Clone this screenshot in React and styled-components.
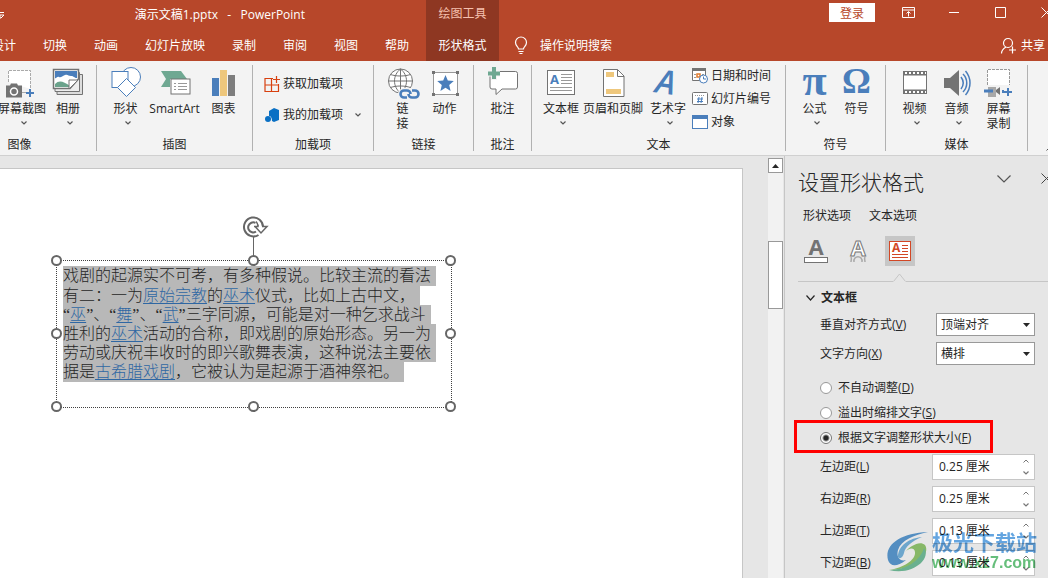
import React, { useState } from 'react'
import styled, { createGlobalStyle, css } from 'styled-components'

const GlobalStyle = createGlobalStyle`
* { box-sizing: border-box; }
body {
    margin: 0;
    color: #262626;
    font-family: "Open Sans", "Noto Sans CJK SC", sans-serif;
    font-size: 12px;
    line-height: 16px;
}
button, input, select {
    color: inherit;
    font: inherit;
}
button {
    margin: 0;
    padding: 0;
    border: 0;
    background: none;
}
svg { display: block; flex: none; overflow: visible; }
`

const Window = styled.div`
display: flex;
flex-direction: column;
height: 100vh;
overflow: hidden;
background: #e6e6e6;
`

/* ---------- title bar and tabs ---------- */

const Header = styled.header`
display: grid;
grid-template-columns: 426px 73px 1fr;
grid-template-rows: 28px 33px;
flex: none;
overflow: hidden;
background: #b7472a;
color: #fff;
`
const TitleBar = styled.div`
display: flex;
align-items: center;
justify-content: space-between;
padding: 2px 121px 0 0;
white-space: pre;
`
const ContextLabel = styled.div`
display: flex;
align-items: center;
justify-content: center;
background: #8e3722;
color: #f5c0ae;
`
const WindowControls = styled.div`
display: flex;
align-items: center;
justify-content: flex-end;
margin-right: -21px;
`
const SignIn = styled.button`
width: 46px;
height: 19px;
margin: 0 10px 3px 0;
padding-top: 2px;
background: #fff;
color: #b7472a;
`
const WindowButton = styled.button`
display: flex;
justify-content: center;
width: 46px;
padding-bottom: 4px;
`
const Tabs = styled.nav`
display: flex;
gap: 1px;
align-items: stretch;
justify-content: flex-end;
padding-right: 4px;
min-width: 0;
`
const Tab = styled.button`
flex: none;
padding: 2px 13px 0;
white-space: nowrap;
${props => props.$active && css`
    padding: 2px 12px 0;
    background: #8e3722;
`}
`
const HeaderTools = styled.div`
display: flex;
align-items: center;
justify-content: space-between;
padding: 2px 3px 0 15px;
`
const HeaderButton = styled.button`
display: flex;
align-items: center;
gap: ${props => props.$gap}px;
`

/* ---------- ribbon ---------- */

const Ribbon = styled.div`
display: flex;
flex: none;
height: 95px;
padding: 4px 0;
background: #f3f3f3;
border-bottom: 1px solid #d0d0d0;
`
const Group = styled.section`
display: flex;
flex: none;
flex-direction: column;
justify-content: space-between;
width: ${props => props.$width}px;
border-right: 1px solid #b1b1b1;
&:first-child {
    margin-left: -57px;
}
`
const GroupBody = styled.div`
display: flex;
justify-content: ${props => props.$align || 'center'};
padding: 0 7px 0 ${props => props.$pad || 7}px;
`
const GroupName = styled.div`
line-height: 12px;
text-align: center;
`
const BigButton = styled.button`
display: flex;
flex: none;
flex-direction: column;
align-items: center;
width: ${props => props.$width || 42}px;
padding-top: 2px;
line-height: 15px;
white-space: pre;
`
const IconBox = styled.span`
display: flex;
align-items: center;
justify-content: center;
width: 32px;
height: 32px;
margin-bottom: 2px;
`
const Chevron = styled.span`
display: flex;
justify-content: center;
padding: 5px 0 0 4px;
`
const SmallColumn = styled.div`
display: flex;
flex: none;
flex-direction: column;
gap: ${props => props.$gap}px;
padding-top: ${props => props.$top}px;
`
const SmallButton = styled.button`
display: flex;
align-items: center;
gap: 3px;
height: 16px;
white-space: nowrap;
`
const SmallChevron = styled.span`
margin-left: 9px;
`
const Glyph = styled.span`
padding-bottom: 4px;
color: #4a7ebb;
font-family: "Liberation Serif", serif;
font-size: ${props => props.$size}px;
font-weight: bold;
line-height: 28px;
`
const RibbonEnd = styled.div`
display: flex;
flex: 1;
align-items: flex-end;
justify-content: flex-end;
margin-right: -6px;
`

/* ---------- slide ---------- */

const Workspace = styled.main`
display: flex;
flex: 1;
min-height: 0;
`
const Slide = styled.div`
position: relative;
flex: 1;
margin: 12px 25px 0 0;
background: #fff;
border-top: 1px solid #c6c6c6;
border-right: 1px solid #c6c6c6;
`
const ShapeFrame = styled.div`
position: absolute;
top: 91px;
left: 56px;
width: 396px;
height: 148px;
padding: 5px 6px;
border: 1px dotted #404040;
`
const Handle = styled.span`
position: absolute;
left: ${props => props.$x};
top: ${props => props.$y};
width: 11px;
height: 11px;
margin: -6px;
border: 2px solid #666;
border-radius: 50%;
background: #fff;
`
const Rotate = styled.svg`
position: absolute;
left: 184px;
top: -46px;
`
const SlideText = styled.p`
margin: 0;
color: #262626;
font-family: "Liberation Serif", "Noto Sans CJK SC", serif;
font-size: 16px;
font-weight: 300;
white-space: nowrap;
`
const Line = styled.span`
display: table;
height: 19px;
padding-right: 5px;
background: #b8b8b8;
line-height: 19px;
&:first-child, &:last-child {
    line-height: 20px;
}
`
const TextLink = styled.a`
color: #2f67a3;
text-decoration: underline;
text-underline-offset: 2px;
`
const ScrollBar = styled.div`
display: flex;
flex-direction: column;
flex: none;
width: 15px;
margin: 2px 1px 0 0;
background: #f2f2f2;
`
const ScrollUp = styled.button`
display: flex;
align-items: center;
justify-content: center;
height: 15px;
border: 1px solid #999;
background: #fff;
`
const ScrollThumb = styled.div`
height: 68px;
margin-top: 68px;
border: 1px solid #999;
background: #fff;
`

/* ---------- format pane ---------- */

const Pane = styled.aside`
flex: none;
width: 264px;
padding: 10px 0 0 13px;
overflow: hidden;
border-left: 1px solid #c6c6c6;
`
const PaneTitle = styled.div`
display: flex;
align-items: center;
margin-right: -4px;
`
const PaneHeading = styled.h2`
flex: 1;
margin: 0;
font-size: 21px;
font-weight: 300;
line-height: 32px;
`
const PaneButton = styled.button`
margin-left: 30px;
padding-bottom: 7px;
`
const PaneTabs = styled.div`
display: flex;
gap: 18px;
margin-top: 8px;
padding-left: 5px;
line-height: 20px;
`
const PaneIcons = styled.div`
display: flex;
gap: 12px;
margin-top: 10px;
padding-left: 3px;
`
const PaneIcon = styled.button`
display: flex;
align-items: center;
justify-content: center;
width: 30px;
height: 30px;
background: ${props => props.$active ? '#c6c6c6' : 'none'};
`
const Divider = styled.div`
display: flex;
align-items: flex-end;
margin-top: 7px;
&::before, &::after {
    content: "";
    width: 95px;
    height: 1px;
    background: #c6c6c6;
}
&::after { flex: 1; }
`
const Section = styled.button`
display: flex;
align-items: center;
gap: 6px;
margin-top: 6px;
padding-left: 8px;
font-weight: bold;
line-height: 20px;
`
const Form = styled.form`
display: flex;
flex-direction: column;
gap: 6px;
padding: 5px 13px 0 22px;
`
const Field = styled.div`
display: flex;
align-items: center;
justify-content: space-between;
`
const SelectBox = styled.span`
display: flex;
position: relative;
width: 99px;
height: 23px;
svg {
    position: absolute;
    top: 10px;
    right: 5px;
    pointer-events: none;
}
`
const Select = styled.select`
width: 100%;
padding: 0 4px;
appearance: none;
border: 1px solid #999;
border-radius: 0;
background: #fff;
`
const Radios = styled.div`
margin: 4px 0 -2px;
`
const RadioRow = styled.label`
display: flex;
position: relative;
align-items: center;
gap: 6px;
height: 25px;
`
const Radio = styled.input`
width: 12px;
height: 12px;
margin: 0;
appearance: none;
border: 1px solid #999;
border-radius: 50%;
background: #fff;
&:checked {
    border-color: #777;
    background: radial-gradient(circle, #262626 0 2px, #fff 4px);
}
`
const Highlight = styled.span`
position: absolute;
top: -5px;
left: -26px;
width: 199px;
height: 33px;
border: 3px solid #f00;
`
const SpinBox = styled.span`
display: flex;
width: 103px;
height: 26px;
border: 1px solid #c6c6c6;
background: #fff;
`
const SpinInput = styled.input`
flex: 1;
min-width: 0;
padding: 0 0 0 6px;
border: 0;
background: none;
outline: none;
`
const SpinButtons = styled.span`
display: flex;
flex-direction: column;
justify-content: space-between;
padding: 4px 5px;
`
const Watermark = styled.div`
display: flex;
position: fixed;
right: 11px;
bottom: 6px;
gap: 1px;
mix-blend-mode: multiply;
opacity: 0.8;
pointer-events: none;
`
const WatermarkText = styled.div`
display: flex;
flex-direction: column;
`
const WatermarkName = styled.span`
color: #3d8fd9;
font-size: 21px;
font-weight: bold;
line-height: 24px;
`
const WatermarkUrl = styled.span`
color: #3fae5a;
font-family: "Liberation Sans", sans-serif;
font-size: 16px;
font-weight: bold;
line-height: 18px;
`

/* ---------- icons ---------- */

const BLUE = '#4a7ebb'
const GREY = '#737373'

const Svg = ({ w = 32, h = w, children, ...rest }) => (
    <svg width={w} height={h} viewBox={`0 0 ${w} ${h}`} fill="none" aria-hidden="true" {...rest}>{children}</svg>
)

const Down = ({ w = 5, h = 3, color = '#555' }) => (
    <Svg w={w + 1} h={h + 1}><path d={`M.5 .5L${(w + 1) / 2} ${h}L${w + .5} .5`} stroke={color} strokeWidth="1.2" /></Svg>
)

const ScreenshotIcon = () => (
    <Svg>
        <path d="M2.500 15V3.500H24.500V22" fill="#fff" stroke="#aaa" strokeDasharray="3 1" />
        <path d="M16 25.500h4" stroke="#aaa" />
        <path d="M0 18.500h4l1-2h6l1 2h4v12H0z" fill={GREY} />
        <circle cx="8" cy="24.500" r="3.500" stroke="#fff" strokeWidth="1.500" />
        <path d="M20 26h8M24 22v8" stroke={BLUE} strokeWidth="2" />
    </Svg>
)
const AlbumIcon = () => (
    <Svg>
        <path d="M5 24.500V27.500H30.500V7.500H28" fill="#ddd" stroke={GREY} />
        <path d="M3 21.500V24.500H27.500V5.500H26" fill="#eee" stroke={GREY} />
        <path d="M1.500 2.500H26.500V12L18 21.500H1.500z" fill="#fff" stroke={GREY} strokeWidth="1.500" />
        <path d="M3 4h22v7c-3 0-3-2-6-2s-3-2-6-1-4 3-6 2-3 2-4 1z" fill={BLUE} />
        <path d="M3 17c4-4 8-3 15 2l-1 1H3z" fill="#6ba38c" />
        <path d="M17 13h9l-9 9z" fill="#fff" stroke={GREY} />
    </Svg>
)
const ShapesIcon = () => (
    <Svg>
        <circle cx="21" cy="10" r="9.500" fill="#fff" stroke={BLUE} />
        <rect x="2" y="4.500" width="16" height="16" fill="#fff" stroke={BLUE} />
        <path d="M16.500 11.500L25.500 20.500L16.500 29.500L7.500 20.500z" fill="#fff" stroke={BLUE} />
    </Svg>
)
const SmartArtIcon = () => (
    <Svg>
        <path d="M2 4h20l6 8H11v8H2l5-8z" fill="#6fa892" />
        <rect x="12" y="12" width="19" height="15" fill="#fff" stroke={GREY} />
        <path d="M15 16.500h2m2 0h9m-13 3h2m2 0h9m-13 3h2m2 0h9" stroke="#999" />
    </Svg>
)
const ChartIcon = () => (
    <Svg>
        <path d="M4 11h7v18H4z" fill={BLUE} />
        <path d="M12 3h7v26h-7z" fill="#eec77c" />
        <path d="M20 8h7v21h-7z" fill="#7d7d7d" />
    </Svg>
)
const StoreIcon = () => (
    <Svg w={16}>
        <path d="M9 2.500H1V15.500H14.500V8M1 9h13.500M7.500 2.500v13M12.500 0v7M9 3.500h7" stroke="#d8400f" strokeWidth="1.200" />
    </Svg>
)
const AddinIcon = () => (
    <Svg w={16}>
        <path d="M5 4l5-3 5 2v10l-5 2-2-1c0-3-1-5-3-5z" fill="#0a70c4" />
        <circle cx="4" cy="12" r="3" fill="#0a70c4" />
    </Svg>
)
const LinkIcon = () => (
    <Svg>
        <circle cx="13.500" cy="14" r="12" fill="#fff" stroke={GREY} />
        <path d="M13.500 2v24M1.500 14h24M3.500 7.500c6 2 14 2 20 0M3.500 20.500c6-2 14-2 20 0M13.500 2c-8 6-8 18 0 24M13.500 2c8 6 8 18 0 24" stroke={GREY} />
        <rect x="11" y="21" width="22" height="12" rx="6" fill="#f3f3f3" />
        <path d="M20 30.500h-3a3.500 3.500 0 010-7h3a3.500 3.500 0 013.500 3.500M25 23.500h3a3.500 3.500 0 010 7h-3a3.500 3.500 0 01-3.500-3.500" stroke={BLUE} strokeWidth="2.600" />
    </Svg>
)
const ActionIcon = () => (
    <Svg>
        <rect x="4.500" y="5.500" width="24" height="22" fill="#fff" stroke="#999" />
        <path d="M3 4h3v3H3zM27 4h3v3h-3zM3 26h3v3H3zM27 26h3v3h-3z" fill={GREY} />
        <path d="M16.500 8l2.300 5.500 6 .5-4.600 4 1.400 6-5.100-3.200L11.400 24l1.400-6-4.600-4 6-.5z" fill={BLUE} />
    </Svg>
)
const CommentIcon = () => (
    <Svg>
        <path d="M6 4.500H28.500a2 2 0 012 2V20a2 2 0 01-2 2H15l-6 5.500V22H5a2 2 0 01-2-2V4.500z" fill="#fff" stroke={GREY} />
        <path d="M1 6.500h12M7 1v12" stroke="#f3f3f3" strokeWidth="6" />
        <path d="M1 6.500h12M7 0v12" stroke="#6fa892" strokeWidth="4" />
    </Svg>
)
const TextBoxIcon = ({ color = BLUE, frame = GREY }) => (
    <Svg>
        <rect x="2.500" y="3.500" width="27" height="24" fill="#fff" stroke={frame} />
        <text x="5" y="17" fill={color} fontSize="13" fontWeight="bold" fontFamily="Open Sans">A</text>
        <path d="M16 7.500h11M16 10.500h11M16 13.500h11M16 16.500h11M5 20.500h22M5 23.500h22" stroke="#999" />
    </Svg>
)
const HeaderFooterIcon = () => (
    <Svg>
        <path d="M6.500 2.500H20.500L27 9V29.500H6.500z" fill="#fff" stroke={GREY} />
        <path d="M20.500 2.500V9.500H27" stroke={GREY} />
        <path d="M9 5h8v5H9zM9 22h15v5H9z" fill="#eec77c" />
    </Svg>
)
const WordArtIcon = () => (
    <Svg>
        <text x="4" y="27" transform="rotate(8 16 16)" fill={BLUE} fontSize="33" fontWeight="600" fontStyle="italic" fontFamily="Open Sans">A</text>
    </Svg>
)
const DateIcon = () => (
    <Svg w={16}>
        <path d="M.5 1.500h13v11H.5z" fill="#fff" stroke={GREY} />
        <path d="M0 0h14v3H0z" fill={GREY} />
        <path d="M2 6.500h2M2 9.500h2M10 6.500h2" stroke="#999" />
        <rect x="5" y="6" width="3" height="3" stroke="#e07b2d" strokeWidth="1.500" />
        <circle cx="11.500" cy="11" r="4" fill="#fff" stroke={BLUE} />
        <path d="M11.500 8.500V11H14" stroke={BLUE} />
    </Svg>
)
const SlideNumberIcon = () => (
    <Svg w={16}>
        <rect x=".5" y="1.500" width="15" height="12" rx="1" fill="#fff" stroke={GREY} />
        <path d="M3 4.500h10" stroke="#999" strokeDasharray="1 1" />
        <path d="M7 6l-1 6M10 6l-1 6M5 8h6M5 10.500h6" stroke={BLUE} />
    </Svg>
)
const ObjectIcon = () => (
    <Svg w={16}>
        <rect x=".5" y="1.500" width="15" height="13" fill="#fff" stroke={BLUE} />
        <path d="M0 1h16v4H0z" fill={BLUE} />
    </Svg>
)
const VideoIcon = () => (
    <Svg>
        <path d="M4 4h24v23H4z" fill={GREY} />
        <path d="M5 8.500h22v14H5z" fill="#fff" />
        <path d="M6 6h21M6 25h21" stroke="#fff" strokeWidth="2" strokeDasharray="2 2" />
    </Svg>
)
const AudioIcon = () => (
    <Svg>
        <path d="M3 11h6l9-8v26l-9-8H3z" fill={GREY} />
        <path d="M20 10c3 4 3 8 0 12M22 7c5 5 5 13 0 18M24.500 4c6 7 6 17 0 24" stroke={BLUE} strokeWidth="1.500" />
    </Svg>
)
const RecordIcon = () => (
    <Svg>
        <path d="M4.500 18V2.500H26.500V18" fill="#fff" stroke="#999" strokeDasharray="3 1" />
        <path d="M5 20h8v10H5z" fill="#a8a8a8" />
        <path d="M1 24h9M19 24.500h2" stroke={BLUE} strokeWidth="3" />
        <path d="M13 23l4-3v8l-4-3z" fill={GREY} />
        <path d="M21 25h8M25 21v8" stroke={BLUE} strokeWidth="2" />
    </Svg>
)
const RibbonModeIcon = () => (
    <Svg w={13} h={11}>
        <path d="M.5 .5h12v10H.5zM.5 3h12M6.500 9.500V5M4.500 6.500L6.500 4.500L8.500 6.500" stroke="#fff" />
    </Svg>
)
const BulbIcon = () => (
    <Svg w={14} h={18}>
        <path d="M4.500 12c0-2-3-3-3-6.500a5.500 5.500 0 0111 0C12.500 9 9.500 10 9.500 12zM4.500 14.500h5M5.500 16.500h3" stroke="#fff" strokeWidth="1.200" />
    </Svg>
)
const ShareIcon = () => (
    <Svg w={16} h={17}>
        <circle cx="7" cy="6" r="4.500" stroke="#fff" strokeWidth="1.200" />
        <path d="M.5 16.500c0-3 2-5 4.500-6.500M11.500 9.500v7M8 13h7" stroke="#fff" strokeWidth="1.200" />
    </Svg>
)
const CloseIcon = ({ color }) => (
    <Svg w={11}><path d="M.5 .5l10 10M10.500 .5l-10 10" stroke={color} /></Svg>
)
const FillIcon = () => (
    <Svg w={26} h={28}>
        <text x="13" y="18" fill={GREY} fontSize="22" fontWeight="bold" fontFamily="Open Sans" textAnchor="middle">A</text>
        <rect x="1.500" y="20.500" width="23" height="5" fill="#fff" stroke={GREY} />
    </Svg>
)
const EffectsIcon = () => (
    <Svg w={26} h={28}>
        <text x="13" y="19" fill="#fff" stroke="#777" fontSize="22" fontWeight="bold" fontFamily="Open Sans" textAnchor="middle">A</text>
        <path d="M6 20c1 2 0 3 0 5M20 20c-1 2 0 3 0 5M9 25c-1-7 9-7 8 0" stroke="#aaa" strokeWidth="1.500" />
    </Svg>
)
const LayoutIcon = () => (
    <Svg w={22} h={20}>
        <rect x=".5" y=".5" width="21" height="19" fill="#fff" stroke="#d24726" />
        <text x="3" y="11" fill="#d24726" fontSize="12" fontWeight="bold" fontFamily="Open Sans">A</text>
        <path d="M13 4.500h6M13 7.500h6M13 10.500h6M3 13.500h16M3 16.500h16" stroke="#d24726" />
    </Svg>
)
const Logo = () => (
    <Svg w={45} h={42}>
        <path d="M2 30C-2 15 14 3 42 2C28 5 15 10 12 20C10 27 14 32 20 30C10 38 4 36 2 30z" fill="#3486cc" />
        <path d="M12 27C12 15 24 8 36 7C26 11 19 17 18 23C17 27 14 30 12 27z" fill="#57a6dc" />
        <path d="M19 22C24 16 34 10 39 15C45 24 30 40 3 40C17 38 30 30 29 22C28 17 23 18 19 22z" fill="#7cc04e" />
        <path d="M3 40C20 40 34 31 38 18C46 29 26 46 3 40z" fill="#52b487" />
    </Svg>
)

const tabs = ['设计', '切换', '动画', '幻灯片放映', '录制', '审阅', '视图', '帮助']

const groups = [
    { name: '图像', width: 154, align: 'flex-end', items: [
        { label: '屏幕截图', icon: <ScreenshotIcon />, width: 50, menu: true },
        { label: '相册', icon: <AlbumIcon />, menu: true },
    ] },
    { name: '插图', width: 156, items: [
        { label: '形状', icon: <ShapesIcon />, menu: true },
        { label: 'SmartArt', icon: <SmartArtIcon />, width: 56 },
        { label: '图表', icon: <ChartIcon /> },
    ] },
    { name: '加载项', width: 121, align: 'flex-start', pad: 11, gap: 15, top: 11, rows: [
        { label: '获取加载项', icon: <StoreIcon /> },
        { label: '我的加载项', icon: <AddinIcon />, menu: true },
    ] },
    { name: '链接', width: 100, items: [
        { label: '链\n接', icon: <LinkIcon /> },
        { label: '动作', icon: <ActionIcon /> },
    ] },
    { name: '批注', width: 58, items: [
        { label: '批注', icon: <CommentIcon /> },
    ] },
    { name: '文本', width: 254, align: 'flex-start', pad: 8, gap: 7, top: 3, items: [
        { label: '文本框', icon: <TextBoxIcon />, menu: true },
        { label: '页眉和页脚', icon: <HeaderFooterIcon />, width: 62 },
        { label: '艺术字', icon: <WordArtIcon />, width: 48, menu: true },
    ], rows: [
        { label: '日期和时间', icon: <DateIcon /> },
        { label: '幻灯片编号', icon: <SlideNumberIcon /> },
        { label: '对象', icon: <ObjectIcon /> },
    ] },
    { name: '符号', width: 100, items: [
        { label: '公式', icon: <Glyph $size={44}>π</Glyph>, menu: true },
        { label: '符号', icon: <Glyph $size={36}>Ω</Glyph> },
    ] },
    { name: '媒体', width: 142, items: [
        { label: '视频', icon: <VideoIcon />, menu: true },
        { label: '音频', icon: <AudioIcon />, menu: true },
        { label: '屏幕\n录制', icon: <RecordIcon /> },
    ] },
]

const RibbonGroup = ({ name, width, align, pad, items = [], rows, gap, top }) => (
    <Group $width={width}>
        <GroupBody $align={align} $pad={pad}>
            {items.map(item => (
                <BigButton key={item.label} $width={item.width}>
                    <IconBox>{item.icon}</IconBox>
                    {item.label}
                    {item.menu && <Chevron><Down /></Chevron>}
                </BigButton>
            ))}
            {rows && (
                <SmallColumn $gap={gap} $top={top}>
                    {rows.map(row => (
                        <SmallButton key={row.label}>
                            {row.icon}
                            {row.label}
                            {row.menu && <SmallChevron><Down /></SmallChevron>}
                        </SmallButton>
                    ))}
                </SmallColumn>
            )}
        </GroupBody>
        <GroupName>{name}</GroupName>
    </Group>
)

const L = ({ children }) => <TextLink href="#">{children}</TextLink>

const handles = [
    ['0%', '0%'], ['50%', '0%'], ['100%', '0%'],
    ['0%', '50%'], ['100%', '50%'],
    ['0%', '100%'], ['50%', '100%'], ['100%', '100%'],
]

const Shape = () => (
    <ShapeFrame>
        <SlideText>
            <Line>戏剧的起源实不可考，有多种假说。比较主流的看法</Line>
            <Line>有二：一为<L>原始宗教</L>的<L>巫术</L>仪式，比如上古中文，</Line>
            <Line>“<L>巫</L>”、“<L>舞</L>”、“<L>武</L>”三字同源，可能是对一种乞求战斗</Line>
            <Line>胜利的<L>巫术</L>活动的合称，即戏剧的原始形态。另一为</Line>
            <Line>劳动或庆祝丰收时的即兴歌舞表演，这种说法主要依</Line>
            <Line>据是<L>古希腊戏剧</L>，它被认为是起源于酒神祭祀。</Line>
        </SlideText>
        <Rotate width="28" height="46" viewBox="0 0 28 46" fill="none">
            <path d="M12.500 22v24" stroke="#666" />
            <path d="M17.500 20A9.500 9.500 0 1122 12M15 16.500A5 5 0 1117 11" stroke="#666" strokeWidth="2" />
            <path d="M13 11.500h4c0-2-1-4-2-5M21 11.500h5L20 18l-6-6.500" fill="#fff" stroke="#666" strokeWidth="1.500" />
        </Rotate>
        {handles.map(([x, y]) => <Handle key={x + y} $x={x} $y={y} />)}
    </ShapeFrame>
)

const radios = [['不自动调整', 'D'], ['溢出时缩排文字', 'S'], ['根据文字调整形状大小', 'F']]
const margins = [['左边距', 'L', '0.25 厘米'], ['右边距', 'R', '0.25 厘米'], ['上边距', 'T', '0.13 厘米'], ['下边距', 'B', '0.13 厘米']]
const selects = [['垂直对齐方式', 'V', ['顶端对齐', '中部对齐', '底端对齐']], ['文字方向', 'X', ['横排', '竖排']]]

const FormatPane = () => {
    const [fit, setFit] = useState('F')
    return (
        <Pane>
            <PaneTitle>
                <PaneHeading>设置形状格式</PaneHeading>
                <PaneButton aria-label="选项"><Down w={13} h={7} /></PaneButton>
                <PaneButton aria-label="关闭"><CloseIcon color="#444" /></PaneButton>
            </PaneTitle>
            <PaneTabs>
                <button>形状选项</button>
                <button>文本选项</button>
            </PaneTabs>
            <PaneIcons>
                <PaneIcon aria-label="文本填充与轮廓"><FillIcon /></PaneIcon>
                <PaneIcon aria-label="文字效果"><EffectsIcon /></PaneIcon>
                <PaneIcon aria-label="文本框" $active><LayoutIcon /></PaneIcon>
            </PaneIcons>
            <Divider>
                <Svg w={13} h={9}><path d="M.5 8.500L6.500 1L12.500 8.500" stroke="#c6c6c6" /></Svg>
            </Divider>
            <Section><Down w={8} h={5} color="#262626" />文本框</Section>
            <Form>
                {selects.map(([label, key, options]) => (
                    <Field key={key}>
                        <label htmlFor={`field-${key}`}>{label}(<u>{key}</u>)</label>
                        <SelectBox>
                            <Select id={`field-${key}`}>
                                {options.map(option => <option key={option}>{option}</option>)}
                            </Select>
                            <Svg w={7} h={4}><path d="M0 0h7L3.500 4z" fill="#262626" /></Svg>
                        </SelectBox>
                    </Field>
                ))}
                <Radios>
                    {radios.map(([label, key]) => (
                        <RadioRow key={key}>
                            <Radio type="radio" name="fit" checked={fit === key} onChange={() => setFit(key)} />
                            <span>{label}(<u>{key}</u>)</span>
                            {key === 'F' && <Highlight />}
                        </RadioRow>
                    ))}
                </Radios>
                {margins.map(([label, key, value]) => (
                    <Field key={key}>
                        <label htmlFor={`field-${key}`}>{label}(<u>{key}</u>)</label>
                        <SpinBox>
                            <SpinInput id={`field-${key}`} defaultValue={value} />
                            <SpinButtons>
                                <button type="button" aria-label="增加"><Svg w={6} h={4}><path d="M.5 3.500L3 1L5.500 3.500" stroke="#777" /></Svg></button>
                                <button type="button" aria-label="减少"><Down color="#777" /></button>
                            </SpinButtons>
                        </SpinBox>
                    </Field>
                ))}
            </Form>
        </Pane>
    )
}

const App = () => (
    <Window>
        <GlobalStyle />
        <Header>
            <TitleBar>
                <Svg w={4} h={8}><path d="M0 1.500h4M0 4h4L1 7H0z" stroke="#fff" /></Svg>
                <span>{'演示文稿1.pptx   -   PowerPoint'}</span>
            </TitleBar>
            <ContextLabel>绘图工具</ContextLabel>
            <WindowControls>
                <SignIn>登录</SignIn>
                <WindowButton aria-label="功能区显示选项"><RibbonModeIcon /></WindowButton>
                <WindowButton aria-label="最小化"><Svg w={11}><path d="M0 5.500h10" stroke="#fff" /></Svg></WindowButton>
                <WindowButton aria-label="最大化"><Svg w={11}><path d="M.5 .5h10v10H.5z" stroke="#fff" /></Svg></WindowButton>
                <WindowButton aria-label="关闭"><CloseIcon color="#fff" /></WindowButton>
            </WindowControls>
            <Tabs>
                {tabs.map(tab => <Tab key={tab}>{tab}</Tab>)}
            </Tabs>
            <Tab $active>形状格式</Tab>
            <HeaderTools>
                <HeaderButton $gap={12}><BulbIcon />操作说明搜索</HeaderButton>
                <HeaderButton $gap={4}><ShareIcon />共享</HeaderButton>
            </HeaderTools>
        </Header>
        <Ribbon>
            {groups.map(group => <RibbonGroup key={group.name} {...group} />)}
            <RibbonEnd><Svg w={8} h={5}><path d="M.5 4.500L4 1L7.500 4.500" stroke="#555" /></Svg></RibbonEnd>
        </Ribbon>
        <Workspace>
            <Slide><Shape /></Slide>
            <ScrollBar>
                <ScrollUp aria-label="向上滚动"><Svg w={7} h={4}><path d="M0 4h7L3.500 0z" fill="#262626" /></Svg></ScrollUp>
                <ScrollThumb />
            </ScrollBar>
            <FormatPane />
        </Workspace>
        <Watermark>
            <Logo />
            <WatermarkText>
                <WatermarkName>极光下载站</WatermarkName>
                <WatermarkUrl>www.xz7.com</WatermarkUrl>
            </WatermarkText>
        </Watermark>
    </Window>
)

export default App
